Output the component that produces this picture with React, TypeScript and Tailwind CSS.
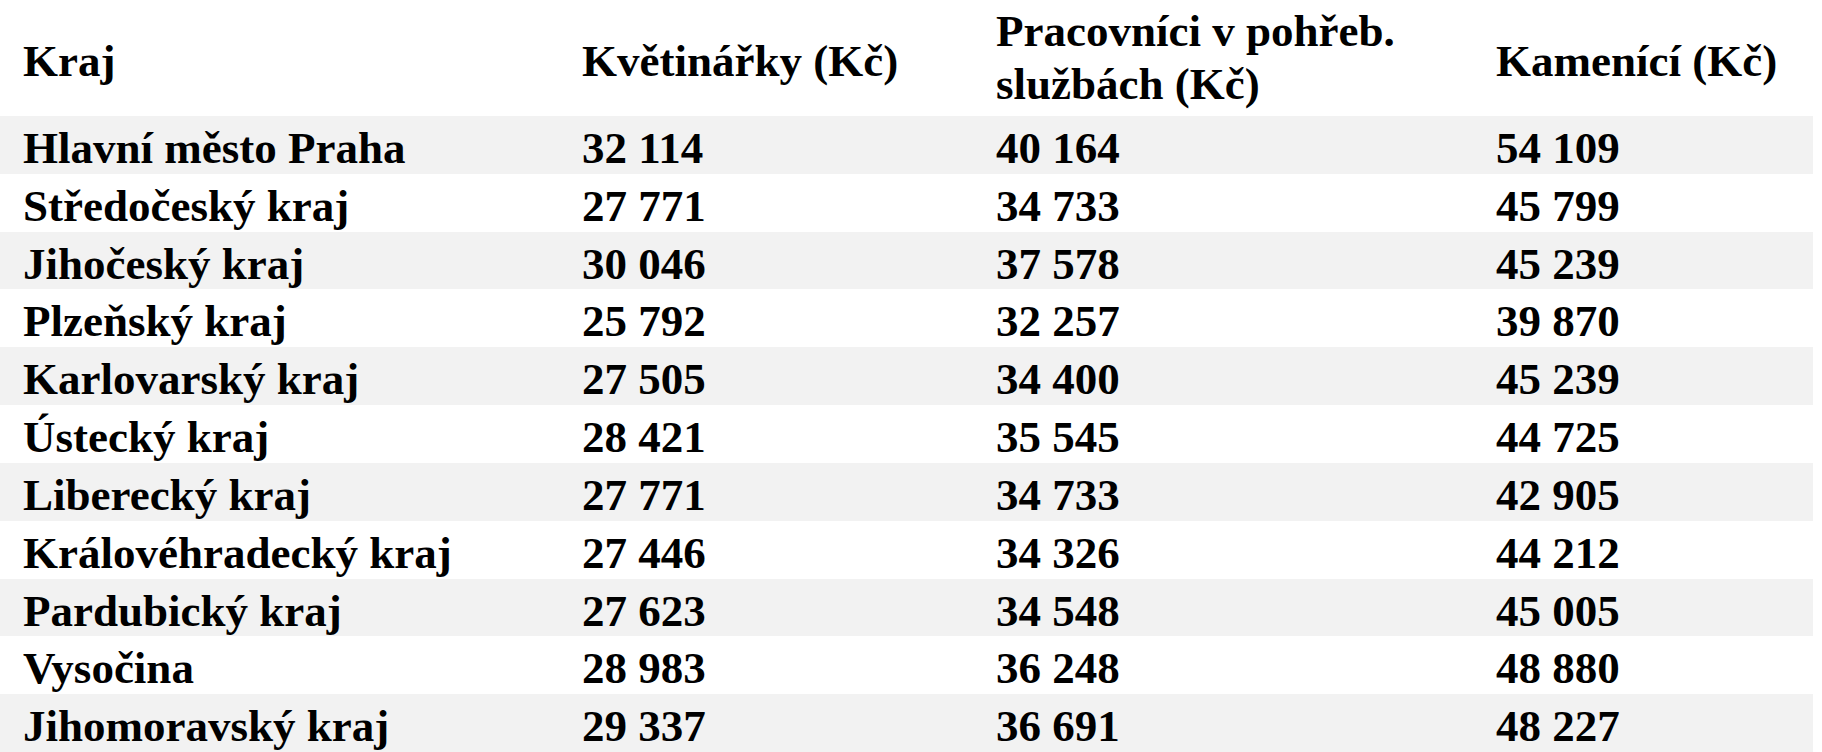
import React from "react";

const rows: [string, string, string, string][] = [
  ["Hlavní město Praha", "32 114", "40 164", "54 109"],
  ["Středočeský kraj", "27 771", "34 733", "45 799"],
  ["Jihočeský kraj", "30 046", "37 578", "45 239"],
  ["Plzeňský kraj", "25 792", "32 257", "39 870"],
  ["Karlovarský kraj", "27 505", "34 400", "45 239"],
  ["Ústecký kraj", "28 421", "35 545", "44 725"],
  ["Liberecký kraj", "27 771", "34 733", "42 905"],
  ["Královéhradecký kraj", "27 446", "34 326", "44 212"],
  ["Pardubický kraj", "27 623", "34 548", "45 005"],
  ["Vysočina", "28 983", "36 248", "48 880"],
  ["Jihomoravský kraj", "29 337", "36 691", "48 227"],
];

export default function App() {
  return (
    <div className="w-[1813px] bg-white text-black font-bold text-[45px] [font-family:'Liberation_Serif',serif]">
      <div className="grid grid-cols-[559px_414px_500px_1fr] pl-[23px] h-[116px] leading-[53.3px]">
        <div className="pt-[34.8px]">Kraj</div>
        <div className="pt-[34.8px]">Květinářky (Kč)</div>
        <div className="pt-[4.8px]">
          Pracovníci v pohřeb.
          <br />
          službách (Kč)
        </div>
        <div className="pt-[34.8px]">Kamenící (Kč)</div>
      </div>
      {rows.map((r, i) => (
        <div
          key={i}
          className={
            "grid grid-cols-[559px_414px_500px_1fr] pl-[23px] h-[57.82px] pt-[6px] leading-[52px] whitespace-nowrap " +
            (i % 2 === 0 ? "bg-[#f2f2f2]" : "bg-white")
          }
        >
          <div>{r[0]}</div>
          <div>{r[1]}</div>
          <div>{r[2]}</div>
          <div>{r[3]}</div>
        </div>
      ))}
    </div>
  );
}
